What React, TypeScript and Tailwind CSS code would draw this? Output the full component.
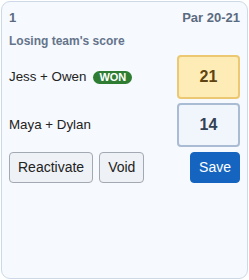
import React from "react";

export default function App() {
  return (
    <div className="p-px" style={{ fontFamily: '"Liberation Sans", Arial, sans-serif' }}>
      <div className="flex h-[278px] w-full flex-col rounded-[9px] border border-[#cdd9e6] bg-[#f6f9fd] px-[7px] pt-[8px]">
        <div className="flex items-center justify-between text-[13px] font-bold leading-4 text-[#5b6b7f]">
          <span>1</span>
          <span>Par 20-21</span>
        </div>
        <div className="mt-[7px] text-[12px] font-bold leading-4 text-[#64748b]">Losing team's score</div>
        <div className="mt-[6px] flex flex-col gap-[4px]">
          <div className="flex items-center justify-between">
            <div className="flex items-center gap-[7px] text-[13.33px] leading-4 text-[#222]">
              <span>Jess + Owen</span>
              <span className="rounded-full bg-[#2e7d32] px-[6px] text-[11px] font-bold leading-[13px] text-white">WON</span>
            </div>
            <div className="flex h-[44px] w-[63px] items-center justify-center rounded-[4px] border-2 border-[#ecc872] bg-[#fdecb6] text-[16px] font-bold text-[#5f4310]">
              21
            </div>
          </div>
          <div className="flex items-center justify-between">
            <div className="text-[13.33px] leading-4 text-[#222]">Maya + Dylan</div>
            <div className="flex h-[44px] w-[63px] items-center justify-center rounded-[4px] border-2 border-[#a9bcd4] bg-[#f1f6fc] text-[16px] font-bold text-[#334155]">
              14
            </div>
          </div>
        </div>
        <div className="mt-[5px] flex items-center justify-between">
          <div className="flex gap-[6px]">
            <button className="rounded-[4px] border border-[#a3a9b2] bg-[#eef1f5] px-[8px] py-[6px] text-[14px] leading-[17px] text-[#222]">
              Reactivate
            </button>
            <button className="rounded-[4px] border border-[#a3a9b2] bg-[#eef1f5] px-[8px] py-[6px] text-[14px] leading-[17px] text-[#222]">
              Void
            </button>
          </div>
          <button className="rounded-[4px] border border-[#1565c0] bg-[#1565c0] px-[8px] py-[6px] text-[14px] leading-[17px] text-white">
            Save
          </button>
        </div>
      </div>
    </div>
  );
}
